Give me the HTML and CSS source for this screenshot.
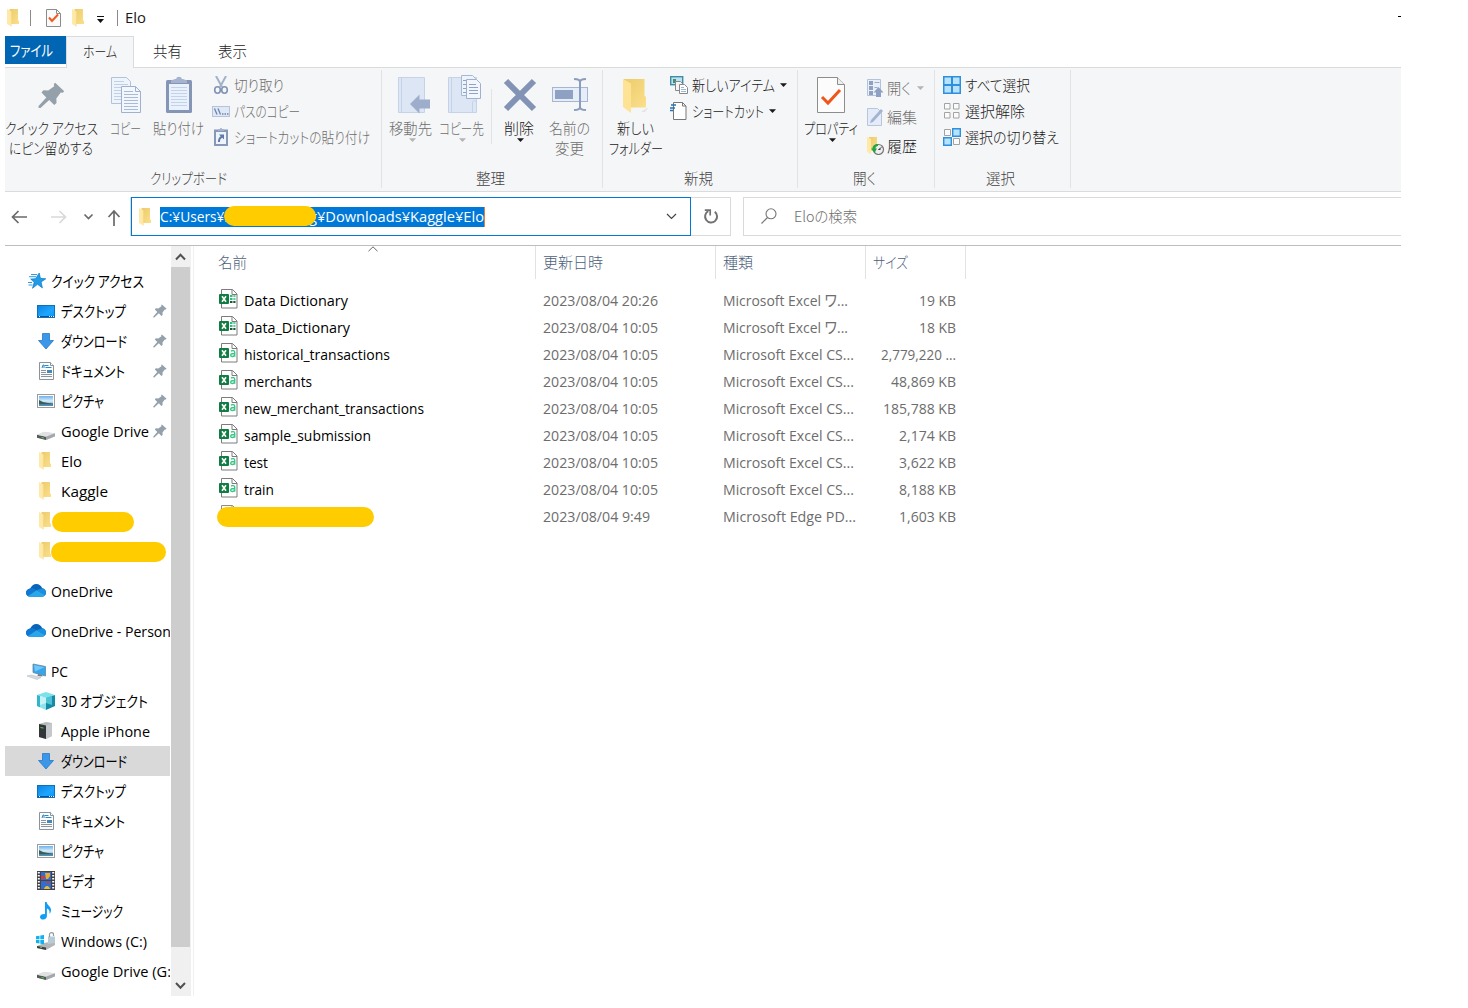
FILE: index.html
```html
<!DOCTYPE html>
<html lang="ja">
<head>
<meta charset="utf-8">
<title>Elo</title>
<link rel="stylesheet" href="styles.css">
</head>
<body>
<svg class="defs" aria-hidden="true">
  <defs>
    <linearGradient id="gold" x1="0" y1="0" x2="1" y2="1"><stop offset="0" stop-color="#eccb6b"/><stop offset="1" stop-color="#fbdf8b"/></linearGradient>
    <linearGradient id="sky" x1="0" y1="0" x2="1" y2="1"><stop offset="0" stop-color="#0a84e0"/><stop offset=".6" stop-color="#1ea5ff"/><stop offset="1" stop-color="#0d95f5"/></linearGradient>
    <linearGradient id="pic" x1="0" y1="0" x2="0" y2="1"><stop offset="0" stop-color="#6fb1ea"/><stop offset=".5" stop-color="#d8edfa"/><stop offset="1" stop-color="#3f86b5"/></linearGradient>
  </defs>
  <symbol id="folder" viewBox="0 0 12 18"><path d="M2.500 0H11v11.500l1 .3V15H3z" fill="url(#gold)"/><path d="M0 0l4.300 2.400V17.600L0 15z" fill="#ffe9a6"/><path d="M4.300 2.400V17.600" stroke="#f3d98a" stroke-width=".5"/></symbol>
  <symbol id="pin" viewBox="0 0 14 14"><path d="M8.900.4l4.700 4.400-.8.8-1-.1-2.300 3 .1 2.400-1.200 1-2.600-2.600L1.300 13.500.2 13.300.3 12.400 4.300 8 1.800 5.500l1-1.200 2.500.1L8.400 2.200 8.200 1.100z" fill="#94a1ab"/></symbol>
  <symbol id="star" viewBox="0 0 18 17"><path d="M11.200 1l1.200 5.300 5.400.5-4.700 3.200 1.300 5.900-4.900-3.600-5 4 1.700-6-3.500-3.300 4.900-.3z" fill="#1f9be8" stroke="#0f78c4" stroke-width=".7"/><path d="M3 2.500h6M1 4.700h7M0 10.500h4M.5 13h4" stroke="#2f9be0" stroke-width="1"/></symbol>
  <symbol id="desktop" viewBox="0 0 18 13"><rect x=".5" y=".5" width="17" height="12" fill="url(#sky)" stroke="#0c70bd"/><path d="M1 11.500h16" stroke="#084f8a"/><path d="M2 11.500h1M12 11.500h1M14 11.500h1M16 11.500h1" stroke="#fff"/></symbol>
  <symbol id="down" viewBox="0 0 16 17"><path d="M4.500.5h7v7h4L8 16 .5 7.500h4z" fill="#3c97e8" stroke="#2478c8" stroke-width=".8"/></symbol>
  <symbol id="doc" viewBox="0 0 15 18"><path d="M.5.5h11l3 3v14H.5z" fill="#fbfcfd" stroke="#8b9298"/><path d="M11.500.5v3h3" fill="#fff" stroke="#8b9298"/><path d="M5.500 3.500h4M6.500 5.500h6" stroke="#2c88c8"/><path d="M3 6l1-3h1v3" fill="none" stroke="#2c88c8"/><path d="M2 8.500h5M2 10.500h5M2 12.500h11M2 14.500h11" stroke="#8c9499"/><path d="M8 8h5v3H8z" fill="#4687b6"/></symbol>
  <symbol id="picture" viewBox="0 0 18 14"><rect x=".5" y=".5" width="17" height="13" fill="#fff" stroke="#989da1"/><rect x="2" y="2" width="14" height="10" fill="url(#pic)"/><path d="M2 6l4 2 5 1 5 .5v1H2z" fill="#375f5a"/></symbol>
  <symbol id="drive" viewBox="0 0 18 10"><path d="M0 5l7-3 11 1.500v3L9 10 0 7.500z" fill="#c9cbcc"/><path d="M0 4.700l9 2V10L0 7.700z" fill="#545859"/><path d="M0 4.700l7-3 11 1.500-9 3.500z" fill="#e0e1e2"/><path d="M9 6.700l9-3.500v3L9 10z" fill="#a5a8aa"/><path d="M4.500 7.500l2.500.5" stroke="#55d04e"/></symbol>
  <symbol id="cloud" viewBox="0 0 20 13"><path d="M4.500 12.800C1.800 12.800 0 11 0 8.800 0 6.500 1.800 4.800 4.200 4.500 5.400 1.800 7.700 0 10.300 0c2.800 0 5 1.700 5.900 4.200C18.500 4.500 20 6.300 20 8.500c0 2.500-1.800 4.300-4.200 4.300z" fill="#0a64b8"/><path d="M4.200 4.500c2-.5 4 0 6 1.700l-8 6C.8 11.500 0 10.300 0 8.800 0 6.500 1.800 4.800 4.200 4.500z" fill="#0f78d4"/><path d="M10.500 6.300l5.700-2.100C18.500 4.500 20 6.300 20 8.500c0 1-.3 1.900-.8 2.600z" fill="#1a8fe0"/><path d="M2 12.100l8.500-5.800 8.700 4.800c-.8 1.100-2 1.700-3.400 1.700H4.500c-1 0-1.800-.3-2.500-.7z" fill="#28a8ea"/></symbol>
  <symbol id="pc" viewBox="0 0 19 17"><path d="M6 1l12.500 2.500v9.500L6 9.500z" fill="#35a5ee" stroke="#64869c" stroke-width=".8"/><path d="M7 2l10.500 2.200L8 8.500z" fill="#71c6fa"/><path d="M11 11l4 1 .5 1.500-5-.5z" fill="#747f88"/><path d="M0 13l4-1 10 2.500-4 2z" fill="#d6dce1" stroke="#abb4ba" stroke-width=".5"/></symbol>
  <symbol id="cube" viewBox="0 0 18 18"><path d="M0 3l9-3 9 3-9 3z" fill="#7ae2ec"/><path d="M0 3l9 3v12l-9-4z" fill="#8be3ec"/><path d="M9 6l9-3v11l-9 4z" fill="#168ba5"/><path d="M0 3l3 1v11.300L0 14z" fill="#2fb6ca"/><path d="M3 4l6 2v5l-6 2z" fill="#c9f2f6"/><path d="M9 6l6-2v9l-6-2z" fill="#4fc3d4"/></symbol>
  <symbol id="tower" viewBox="0 0 15 17"><path d="M1 2l7-2 6 1v13l-6 3-7-2z" fill="#b7babd"/><path d="M1 2l7 1.500V17l-7-2z" fill="#323638"/><path d="M8 3.500L14 1v13l-6 3z" fill="#c5c8ca"/><path d="M2.500 5.500l3 .6" stroke="#55d04e"/></symbol>
  <symbol id="video" viewBox="0 0 18 19"><path d="M0 0h18v19H0z" fill="#444"/><path d="M1.800 1v18M16.200 1v18" stroke="#fff" stroke-width="2" stroke-dasharray="1.500 1.500"/><path d="M4 1h10v8H4zM4 10h10v8H4z" fill="#356bd0"/><path d="M8 2h5v3l-2 3H9z" fill="#e6b12a"/><path d="M4 5h4v3H4z" fill="#cf4038"/><path d="M9 12h4l-2-2z" fill="#d83a2e"/><path d="M7 18c1-4 5-4 6 0z" fill="#e6bd35"/></symbol>
  <symbol id="note" viewBox="0 0 12 18"><path d="M5 0h1.700c.3 3.500 4.800 4.500 4.300 8.500-.2 1.700-.7 2.500-1.400 3.200C10 8.500 8.500 7 6.900 6.500V14c0 2-1.600 3.500-3.700 3.500S0 16.400 0 14.900C0 13 2.500 11.800 5 12.200z" fill="#0f9df5"/></symbol>
  <symbol id="windrive" viewBox="0 0 20 18"><path d="M1 14l7-3 11-2v4l-9 5-9-2z" fill="#b2b6b8"/><path d="M0 4.200l3.500-.5v3.500H0zM4.300 3.600L8 3v4.200H4.300zM0 8h3.500v3.500L0 11zM4.300 8H8v4.200l-3.700-.5z" fill="#12b0f0"/><path d="M1 14l9 1.500V18l-9-2z" fill="#3c4041"/><path d="M12 4.500h7V11l-7 1z" fill="#b7cbd5"/><path d="M13.500 5V2.500c0-2.500 4-2.500 4 0V4" fill="none" stroke="#8f9a9f" stroke-width="1.200"/><path d="M4 15.200l2 .3" stroke="#55d04e"/></symbol>
  <symbol id="xlsx" viewBox="0 0 19 20"><path d="M2.500.5h11l4.500 4.500v14H2.500z" fill="#fff" stroke="#7c7c7c"/><path d="M13 .5V5.500h5" fill="none" stroke="#7c7c7c"/><path d="M11 7h2.500M11 10h2.500" stroke="#2fbd78" stroke-width="2"/><path d="M14.300 7h2.200M14.300 10h2.200" stroke="#59d39c" stroke-width="2"/><path d="M11 13h2.500M14.300 13h2.200" stroke="#185c37" stroke-width="2"/><rect x="0" y="5" width="10" height="10" rx="1" fill="#107c41"/><path d="M3 7.200l4 5.600M7 7.200l-4 5.600" stroke="#fff" stroke-width="1.600"/></symbol>
  <symbol id="csv" viewBox="0 0 19 20"><path d="M2.500.5h11l4.500 4.500v14H2.500z" fill="#fff" stroke="#7c7c7c"/><path d="M13 .5V5.500h5" fill="none" stroke="#7c7c7c"/><path d="M12 8c1.500-.7 3.700-.6 3.700 1.200v4.600M15.700 10.500c-2-.1-4 .2-4 1.700 0 1.900 3.200 1.600 4-.3" fill="none" stroke="#37c885" stroke-width="1.400"/><rect x="0" y="5" width="10" height="10" rx="1" fill="#107c41"/><path d="M3 7.200l4 5.600M7 7.200l-4 5.600" stroke="#fff" stroke-width="1.600"/></symbol>
  <symbol id="page" viewBox="0 0 19 20"><path d="M2.500.5h11l4.500 4.500v14H2.500z" fill="#fff" stroke="#8c8c8c"/><path d="M13 .5V5.500h5" fill="none" stroke="#8c8c8c"/></symbol>
  <symbol id="caret" viewBox="0 0 7 4"><path d="M0 .2h7L3.500 3.900z" fill="currentColor"/></symbol>
</svg>

<div class="window">
  <header class="titlebar">
    <svg class="title-icons" viewBox="5 0 117 36">
      <use href="#folder" x="7" y="9" width="12" height="18"/>
      <path d="M30.500 10v16M117.500 10v16" stroke="#8a8a8a"/>
      <path d="M46.500 9.500h10l4 4v13h-14z" fill="#fafafa" stroke="#8c8c8c"/><path d="M56.500 9.500v4h4" fill="none" stroke="#8c8c8c"/><path d="M49 17.500l3 3.500 6-6.500" fill="none" stroke="#f05a1c" stroke-width="2"/>
      <use href="#folder" x="72" y="9" width="12" height="18"/>
      <path d="M97 16.500h7" stroke="#111"/><path d="M97 19h7l-3.500 4z" fill="#111"/>
    </svg>
    <span class="t en title" data-w="21">Elo</span>
    <i class="minimize"></i>
  </header>

  <nav class="tabs">
    <span class="tab file"><span class="t" data-w="43">ファイル</span></span>
    <span class="tab active"><span class="t" data-w="34">ホーム</span></span>
    <span class="tab"><span class="t" data-w="29">共有</span></span>
    <span class="tab"><span class="t" data-w="29">表示</span></span>
  </nav>

  <section class="ribbon">
    <div class="group clipboard">
      <div class="tools">
        <div class="big w94">
          <svg viewBox="5 75 94 40"><use href="#pin" x="38" y="82" width="27" height="27"/></svg>
          <span class="t nudge" data-w="93">クイック アクセス</span><span class="t nudge" data-w="84">にピン留めする</span>
        </div>
        <div class="big w52 off">
          <svg viewBox="99 75 52 40">
            <path d="M111.500 77.500h15l4 4v22h-19z" fill="#eef4fc" stroke="#b3c2da"/><path d="M114 84.500h14M114 87.500h14M114 90.500h14M114 93.500h14M114 96.500h14M114 99.500h14M114 81.500h10" stroke="#c2cfe4"/>
            <path d="M121.500 86.500h14l5 5v21h-19z" fill="#f2f7fe" stroke="#9fb1cf"/><path d="M135.500 86.500v5h5" fill="none" stroke="#9fb1cf"/><path d="M124 91.500h9M124 94.500h14M124 97.500h14M124 100.500h14M124 103.500h14M124 106.500h14M124 109.500h14" stroke="#a9bad6"/>
          </svg>
          <span class="t" data-w="31">コピー</span>
        </div>
        <div class="big w55 off">
          <svg viewBox="151 75 55 40"><rect x="166" y="80" width="26" height="33" rx="1.500" fill="#8595b5"/><path d="M169 84h20v26h-20z" fill="#e9f1fc"/><path d="M171 87.500h16M171 90.500h16M171 93.500h16M171 96.500h16M171 99.500h16M171 102.500h16M171 105.500h16" stroke="#c4d2e8"/><path d="M171 83v-2.500l4-1.500h1.200c.2-3 5.400-3 5.600 0h1.200l4 1.500V83z" fill="#a5b3ce"/></svg>
          <span class="t" data-w="51">貼り付け</span>
        </div>
        <div class="smalls first off">
          <div class="small"><svg viewBox="0 0 18 18"><path d="M4 0l6 11M14 0L8 11" stroke="#a3b1c9" stroke-width="2"/><ellipse cx="5.500" cy="14" rx="2.800" ry="3.200" fill="none" stroke="#8093b5" stroke-width="1.600"/><ellipse cx="12.500" cy="14" rx="2.800" ry="3.200" fill="none" stroke="#8093b5" stroke-width="1.600"/></svg><span class="t" data-w="50">切り取り</span></div>
          <div class="small"><svg viewBox="0 0 18 18"><rect x=".5" y="4.500" width="17" height="10" fill="#dfe8f5" stroke="#b5c4dc"/><path d="M2.500 6.500l2.500 6M6 6.500l2.500 6" stroke="#6f84ab" stroke-width="1.300"/><path d="M10 12h1.500M12.500 12H14M15 12h1.500" stroke="#6f84ab" stroke-width="1.500"/></svg><span class="t" data-w="66">パスのコピー</span></div>
          <div class="small"><svg viewBox="0 0 18 18"><rect x="2" y="1.500" width="14" height="16.500" fill="#8798b8"/><path d="M4 4h10v12H4z" fill="#eef4fc"/><path d="M6 3V1h2c0-1.500 2-1.500 2 0h2v2z" fill="#a5b3ce"/><path d="M7 6.500h5v5l-1.700-1.700C8.500 10.500 8 12 8 14H6c0-3 .8-4.500 2.700-5.800z" fill="#6079a6"/></svg><span class="t" data-w="136">ショートカットの貼り付け</span></div>
        </div>
      </div>
      <div class="caption shift"><span class="t" data-w="77">クリップボード</span></div>
    </div>

    <div class="group organize">
      <div class="tools">
        <div class="big w53 off">
          <svg viewBox="384 75 53 40"><path d="M398.500 77.500h26v35h-26z" fill="#dce6f5" stroke="#c5d2e7"/><path d="M401.500 78v34" stroke="#c5d2e7"/><path d="M410 104l9.500-9.500v5H430v9h-10.500v5z" fill="#9dadcb"/></svg>
          <span class="t" data-w="43">移動先</span><svg class="caret"><use href="#caret"/></svg>
        </div>
        <div class="big w48 off">
          <svg viewBox="437 75 48 40"><path d="M448.500 77.500h28v35h-28z" fill="#dce6f5" stroke="#c5d2e7"/><path d="M451.500 78v34M472.500 112v-10l2-2 2 2v10" fill="none" stroke="#c5d2e7"/><path d="M461.500 75.500h11l3 3v17h-14z" fill="#eef4fc" stroke="#a8b8d4"/><path d="M466.500 79.500h10l4 4v15h-14z" fill="#f2f7fe" stroke="#9fb1cf"/><path d="M469 84.500h7M469 87.500h9M469 90.500h9M469 93.500h9M463 80.500h3M463 84.500h3M463 88.500h3M463 92.500h3" stroke="#8fa3c6"/></svg>
          <span class="t" data-w="45">コピー先</span><svg class="caret"><use href="#caret"/></svg>
        </div>
        <i class="divider"></i>
        <div class="big w50">
          <svg viewBox="494 75 50 40"><path d="M506 81l28 28M534 81l-28 28" stroke="#8293b5" stroke-width="6"/></svg>
          <span class="t" data-w="30">削除</span><svg class="caret"><use href="#caret"/></svg>
        </div>
        <div class="big w50 off">
          <svg viewBox="544 75 50 40"><rect x="552.500" y="87.500" width="35" height="14" fill="#e5edf8" stroke="#a6b6d2"/><rect x="555" y="90" width="18" height="9" fill="#8fa1c2"/><path d="M574 79c4 0 6 1 6 3v25c0 2-2 3-6 3M586 79c-4 0-6 1-6 3v25c0 2 2 3 6 3" fill="none" stroke="#8b9dbe" stroke-width="2"/></svg>
          <span class="t" data-w="41">名前の</span><span class="t" data-w="29">変更</span>
        </div>
      </div>
      <div class="caption"><span class="t" data-w="29">整理</span></div>
    </div>

    <div class="group new">
      <div class="tools">
        <div class="big w54">
          <svg viewBox="609 75 54 40"><path d="M641 112l6-4h1l-3 4z" fill="#e4e4e4"/><path d="M624 79h20.500v17l1.500 1v10l-1 .5H626z" fill="url(#gold)"/><path d="M623 79l8 4.500V113l-8-6z" fill="#ffe394"/></svg>
          <span class="t nudge" data-w="37">新しい</span><span class="t" data-w="54">フォルダー</span>
        </div>
        <div class="smalls">
          <div class="small"><svg viewBox="0 0 18 18"><rect x=".7" y=".7" width="12" height="8" fill="#bfe3ee" stroke="#3f8ca8" stroke-width="1.400"/><path d="M3 3h3v4H3z" fill="#3d8f7a"/><path d="M5.500 5.500h5l3 3v6h-8z" fill="#f5f5f5" stroke="#888"/><path d="M9.500 8.500h5l3 3v6h-8z" fill="#fff" stroke="#888"/><path d="M11 11.500h3M11 13.500h5M11 15.500h5" stroke="#9ab6d8"/></svg><span class="t" data-w="83">新しいアイテム</span><svg class="caret"><use href="#caret"/></svg></div>
          <div class="small"><svg viewBox="0 0 18 18"><path d="M3.500.5h9l3.500 3.500v13.500H3.500z" fill="#fff" stroke="#777"/><path d="M12.500.5v3.500h3.500" fill="none" stroke="#777"/><path d="M1 3h5M0 6h5M0 8.500h3" stroke="#2673b5" stroke-width="1.300"/></svg><span class="t" data-w="72">ショートカット</span><svg class="caret"><use href="#caret"/></svg></div>
        </div>
      </div>
      <div class="caption"><span class="t" data-w="29">新規</span></div>
    </div>

    <div class="group open">
      <div class="tools">
        <div class="big w54">
          <svg viewBox="804 75 54 40"><path d="M817.500 77.500h20l7 7v28h-27z" fill="#fcfcfc" stroke="#8d8d8d"/><path d="M837.500 77.500v7h7" fill="#eee" stroke="#8d8d8d"/><path d="M822 97l6 6 12-13" fill="none" stroke="#f0561a" stroke-width="3"/></svg>
          <span class="t" data-w="54">プロパティ</span><svg class="caret"><use href="#caret"/></svg>
        </div>
        <div class="smalls tall">
          <div class="small off"><svg viewBox="0 0 18 18"><path d="M.5.5h13v16H.5z" fill="#e9f0fa" stroke="#b4c2da"/><path d="M2 2h4v4H2zM2 7h4v4H2zM2 12h4v4H2z" fill="#8fa0c0"/><path d="M7.500 3.500h5M7.500 8.500h3" stroke="#9bacca"/><path d="M11.500 8l5 5.500H14V18H9v-4.500H6.500z" fill="#8fa1c3"/></svg><span class="t" data-w="24">開く</span><svg class="caret"><use href="#caret"/></svg></div>
          <div class="small off"><svg viewBox="0 0 18 18"><path d="M.5.5h10l4 4v13H.5z" fill="#e3ecf8" stroke="#b7c5dd"/><path d="M3 15l1-3L14 1l2 2L6 14z" fill="#a4b4d0"/></svg><span class="t" data-w="30">編集</span></div>
          <div class="small"><svg viewBox="0 0 18 18"><path d="M2 0h8v14H2z" fill="url(#gold)"/><path d="M0 0l4 2v15l-4-2z" fill="#ffe9a6"/><circle cx="11.500" cy="12.500" r="5" fill="#eee" stroke="#777" stroke-width="1.200"/><path d="M11.500 12.500l3-2M11.500 12.500h2" stroke="#444"/><path d="M11 7c-3.500 0-5.500 2-5.500 4.500H4l3.500 4.500 2.500-4.500H8.500c0-1.500 1-2.500 2.500-2.500z" fill="#29a344"/></svg><span class="t" data-w="30">履歴</span></div>
        </div>
      </div>
      <div class="caption"><span class="t" data-w="23">開く</span></div>
    </div>

    <div class="group select">
      <div class="tools">
        <div class="smalls">
          <div class="small"><svg viewBox="0 0 18 18"><path d="M0 0h18v18H0z" fill="#2e8fdc"/><path d="M1.500 1.500h6.500v6.500H1.500zM10 1.500h6.500v6.500H10zM1.500 10h6.500v6.500H1.500zM10 10h6.500v6.500H10z" fill="#b7e2fb"/></svg><span class="t" data-w="65">すべて選択</span></div>
          <div class="small"><svg viewBox="0 0 18 18"><path d="M1.500 1.500h5.500v5.500H1.500zM10.500 1.500h5.500v5.500h-5.500zM1.500 10.500h5.500v5.500H1.500zM10.500 10.500h5.500v5.500h-5.500z" fill="#fbfbfb" stroke="#a3a3a3"/></svg><span class="t" data-w="60">選択解除</span></div>
          <div class="small"><svg viewBox="0 0 18 18"><path d="M1.500 1.500h6v6h-6zM10.500 10.500h6v6h-6z" fill="#fbfbfb" stroke="#a3a3a3"/><path d="M9.700.7h7.600v7.600H9.700zM.7 9.700h7.600v7.600H.7z" fill="#b7e2fb" stroke="#2e8fdc" stroke-width="1.400"/></svg><span class="t" data-w="94">選択の切り替え</span></div>
        </div>
      </div>
      <div class="caption"><span class="t" data-w="29">選択</span></div>
    </div>
  </section>

  <section class="navbar">
    <svg class="arrows" viewBox="5 197 125 39" fill="none">
      <path d="M12.500 217H27M18.500 211l-6 6 6 6" stroke="#6a6a6a" stroke-width="1.700"/>
      <path d="M51 217h14.500M59.500 211l6 6-6 6" stroke="#d9d9d9" stroke-width="1.700"/>
      <path d="M84.500 214.500l4 4 4-4" stroke="#6a6a6a" stroke-width="1.700"/>
      <path d="M114 226v-15M108.500 217l5.500-6 5.500 6" stroke="#6a6a6a" stroke-width="1.700"/>
    </svg>
    <div class="address">
      <svg class="folder-icon"><use href="#folder"/></svg>
      <div class="selection"><span class="t en" data-w="71">C:¥Users¥s</span><span class="t en" data-w="175">g¥Downloads¥Kaggle¥Elo</span><i class="mask path-mask"></i></div>
      <svg class="chev" viewBox="0 0 11 7"><path d="M1 1l4.500 4.500L10 1" fill="none" stroke="#444" stroke-width="1.200"/></svg>
    </div>
    <div class="refresh"><svg viewBox="0 0 16 16"><path d="M11.800 2.800a6 6 0 1 1-6.500-.6" fill="none" stroke="#727272" stroke-width="2"/><path d="M1.800 1.200h5.400v5.400" fill="none" stroke="#727272" stroke-width="1.700"/></svg></div>
    <div class="search"><svg viewBox="0 0 16 16"><circle cx="10" cy="5.800" r="5" fill="none" stroke="#777" stroke-width="1.100"/><path d="M6.500 9.500L.5 15.500" stroke="#777" stroke-width="1.200"/></svg><span class="t" data-w="63">Eloの検索</span></div>
  </section>

  <main class="content">
    <aside class="tree">
      <div class="node root"><svg viewBox="0 0 20 20"><use href="#star" x="2" y="1" width="18" height="17"/></svg><span class="t" data-w="93">クイック アクセス</span></div>
      <div class="node"><svg viewBox="0 0 20 20"><use href="#desktop" x="1" y="4" width="18" height="13"/></svg><span class="t" data-w="65">デスクトップ</span><svg class="pin"><use href="#pin"/></svg></div>
      <div class="node"><svg viewBox="0 0 20 20"><use href="#down" x="2" y="2" width="16" height="17"/></svg><span class="t" data-w="66">ダウンロード</span><svg class="pin"><use href="#pin"/></svg></div>
      <div class="node"><svg viewBox="0 0 20 20"><use href="#doc" x="3" y="1" width="15" height="18"/></svg><span class="t" data-w="64">ドキュメント</span><svg class="pin"><use href="#pin"/></svg></div>
      <div class="node"><svg viewBox="0 0 20 20"><use href="#picture" x="1" y="3" width="18" height="14"/></svg><span class="t" data-w="43">ピクチャ</span><svg class="pin"><use href="#pin"/></svg></div>
      <div class="node"><svg viewBox="0 0 20 20"><use href="#drive" x="1" y="9" width="18" height="10"/></svg><span class="t en" data-w="88">Google Drive</span><svg class="pin"><use href="#pin"/></svg></div>
      <div class="node"><svg viewBox="0 0 20 20"><use href="#folder" x="3" y="1" width="12" height="18"/></svg><span class="t en" data-w="21">Elo</span></div>
      <div class="node"><svg viewBox="0 0 20 20"><use href="#folder" x="3" y="1" width="12" height="18"/></svg><span class="t en" data-w="47">Kaggle</span></div>
      <div class="node"><svg viewBox="0 0 20 20"><use href="#folder" x="3" y="1" width="12" height="18"/></svg><i class="mask short"></i></div>
      <div class="node"><svg viewBox="0 0 20 20"><use href="#folder" x="3" y="1" width="12" height="18"/></svg><i class="mask long"></i></div>
      <div class="node root section"><svg viewBox="0 0 20 20"><use href="#cloud" x="0" y="3" width="20" height="13"/></svg><span class="t en" data-w="62">OneDrive</span></div>
      <div class="node root section"><svg viewBox="0 0 20 20"><use href="#cloud" x="0" y="3" width="20" height="13"/></svg><span class="t en" data-w="120">OneDrive - Person</span></div>
      <div class="node root section"><svg viewBox="0 0 20 20"><use href="#pc" x="1" y="2" width="19" height="17"/></svg><span class="t en" data-w="17">PC</span></div>
      <div class="node"><svg viewBox="0 0 20 20"><use href="#cube" x="1" y="1" width="18" height="18"/></svg><span class="t" data-w="87">3D オブジェクト</span></div>
      <div class="node"><svg viewBox="0 0 20 20"><use href="#tower" x="2" y="1" width="15" height="17"/></svg><span class="t en" data-w="89">Apple iPhone</span></div>
      <div class="node current"><svg viewBox="0 0 20 20"><use href="#down" x="2" y="2" width="16" height="17"/></svg><span class="t" data-w="66">ダウンロード</span></div>
      <div class="node"><svg viewBox="0 0 20 20"><use href="#desktop" x="1" y="4" width="18" height="13"/></svg><span class="t" data-w="65">デスクトップ</span></div>
      <div class="node"><svg viewBox="0 0 20 20"><use href="#doc" x="3" y="1" width="15" height="18"/></svg><span class="t" data-w="64">ドキュメント</span></div>
      <div class="node"><svg viewBox="0 0 20 20"><use href="#picture" x="1" y="3" width="18" height="14"/></svg><span class="t" data-w="43">ピクチャ</span></div>
      <div class="node"><svg viewBox="0 0 20 20"><use href="#video" x="1" y="0" width="18" height="19"/></svg><span class="t" data-w="34">ビデオ</span></div>
      <div class="node"><svg viewBox="0 0 20 20"><use href="#note" x="4" y="1" width="12" height="18"/></svg><span class="t" data-w="62">ミュージック</span></div>
      <div class="node"><svg viewBox="0 0 20 20"><use href="#windrive" x="0" y="1" width="20" height="18"/></svg><span class="t en" data-w="86">Windows (C:)</span></div>
      <div class="node"><svg viewBox="0 0 20 20"><use href="#drive" x="1" y="9" width="18" height="10"/></svg><span class="t en" data-w="110">Google Drive (G:</span></div>
    </aside>

    <div class="scrollbar">
      <svg viewBox="0 0 20 20"><path d="M5 13.500l4.500-4.700 4.500 4.700" fill="none" stroke="#505050" stroke-width="2"/></svg>
      <i class="thumb"></i>
      <svg viewBox="0 0 20 20"><path d="M5 7l4.500 4.700L14 7" fill="none" stroke="#505050" stroke-width="2"/></svg>
    </div>

    <section class="files">
      <div class="columns">
        <span class="col name"><span class="t" data-w="29">名前</span><svg class="sort" viewBox="0 0 10 6"><path d="M.5 5.200L5 .8l4.500 4.400" fill="none" stroke="#666"/></svg></span>
        <span class="col"><span class="t" data-w="60">更新日時</span></span>
        <span class="col"><span class="t" data-w="30">種類</span></span>
        <span class="col"><span class="t" data-w="35">サイズ</span></span>
      </div>
      <div class="row"><span class="fname"><svg><use href="#xlsx"/></svg><span class="t en" data-w="104">Data Dictionary</span></span><span class="cell"><span class="t en" data-w="115">2023/08/04 20:26</span></span><span class="cell"><span class="t en" data-w="125">Microsoft Excel ワ...</span></span><span class="size"><span class="t en" data-w="37">19 KB</span></span></div>
      <div class="row"><span class="fname"><svg><use href="#xlsx"/></svg><span class="t en" data-w="106">Data_Dictionary</span></span><span class="cell"><span class="t en" data-w="115">2023/08/04 10:05</span></span><span class="cell"><span class="t en" data-w="125">Microsoft Excel ワ...</span></span><span class="size"><span class="t en" data-w="37">18 KB</span></span></div>
      <div class="row"><span class="fname"><svg><use href="#csv"/></svg><span class="t en" data-w="146">historical_transactions</span></span><span class="cell"><span class="t en" data-w="115">2023/08/04 10:05</span></span><span class="cell"><span class="t en" data-w="131">Microsoft Excel CS...</span></span><span class="size"><span class="t en" data-w="75">2,779,220 ...</span></span></div>
      <div class="row"><span class="fname"><svg><use href="#csv"/></svg><span class="t en" data-w="68">merchants</span></span><span class="cell"><span class="t en" data-w="115">2023/08/04 10:05</span></span><span class="cell"><span class="t en" data-w="131">Microsoft Excel CS...</span></span><span class="size"><span class="t en" data-w="65">48,869 KB</span></span></div>
      <div class="row"><span class="fname"><svg><use href="#csv"/></svg><span class="t en" data-w="180">new_merchant_transactions</span></span><span class="cell"><span class="t en" data-w="115">2023/08/04 10:05</span></span><span class="cell"><span class="t en" data-w="131">Microsoft Excel CS...</span></span><span class="size"><span class="t en" data-w="73">185,788 KB</span></span></div>
      <div class="row"><span class="fname"><svg><use href="#csv"/></svg><span class="t en" data-w="127">sample_submission</span></span><span class="cell"><span class="t en" data-w="115">2023/08/04 10:05</span></span><span class="cell"><span class="t en" data-w="131">Microsoft Excel CS...</span></span><span class="size"><span class="t en" data-w="57">2,174 KB</span></span></div>
      <div class="row"><span class="fname"><svg><use href="#csv"/></svg><span class="t en" data-w="24">test</span></span><span class="cell"><span class="t en" data-w="115">2023/08/04 10:05</span></span><span class="cell"><span class="t en" data-w="131">Microsoft Excel CS...</span></span><span class="size"><span class="t en" data-w="57">3,622 KB</span></span></div>
      <div class="row"><span class="fname"><svg><use href="#csv"/></svg><span class="t en" data-w="30">train</span></span><span class="cell"><span class="t en" data-w="115">2023/08/04 10:05</span></span><span class="cell"><span class="t en" data-w="131">Microsoft Excel CS...</span></span><span class="size"><span class="t en" data-w="57">8,188 KB</span></span></div>
      <div class="row"><span class="fname"><svg><use href="#page"/></svg><i class="mask file-mask"></i></span><span class="cell"><span class="t en" data-w="107">2023/08/04 9:49</span></span><span class="cell"><span class="t en" data-w="133">Microsoft Edge PD...</span></span><span class="size"><span class="t en" data-w="57">1,603 KB</span></span></div>
    </section>
  </main>
</div>
<script src="fit.js"></script>
</body>
</html>
```
FILE: styles.css
```css
* { box-sizing: border-box; }
body { margin: 0; background: #fff; color: #1a1a1a; font: 15px/20px "Noto Sans CJK JP", sans-serif; font-feature-settings: "palt"; overflow: hidden; }
svg { display: block; flex: none; }
.defs { position: absolute; width: 0; height: 0; }
.t { display: inline-block; flex: none; white-space: pre; transform-origin: 0 50%; font-weight: 300; }
.en { font-family: "Open Sans", "Noto Sans CJK JP", sans-serif; font-size: 14.5px; font-weight: 400; }
.mask { display: block; flex: none; height: 20px; border-radius: 10px; background: #ffcc00; }

.window { width: 1396px; margin-left: 5px; }

.titlebar { display: flex; align-items: center; height: 36px; }
.title-icons { width: 117px; height: 36px; }
.title { margin-left: 3px; }
.minimize { width: 3px; height: 1px; margin: 0 0 3px auto; background: #000; }

.tabs { display: flex; height: 31px; }
.tab { display: flex; justify-content: center; padding: 5px 0 0 1px; width: 65px; }
.tab.file { width: 61px; height: 28px; padding: 4px 8px 0 0; background: #0066b4; color: #fff; }
.tab.file .t, .tree .t { font-weight: 400; }
.tab.active { position: relative; z-index: 1; width: 68px; height: 32px; padding: 4px 0 0; border: 1px solid #dadbdc; border-bottom: 0; background: #f5f6f7; }

.ribbon { display: flex; height: 125px; border-top: 1px solid #dadbdc; border-bottom: 1px solid #dadbdc; background: #f5f6f7; }
.group { display: flex; flex-direction: column; justify-content: space-between; height: 120px; background: linear-gradient(#e2e3e4, #e2e3e4) right 2px / 1px 118px no-repeat; }
.clipboard { width: 377px; }
.organize { width: 221px; padding-left: 2px; }
.new { width: 195px; padding-left: 6px; }
.open { width: 137px; padding-left: 6px; }
.select { width: 136px; padding-left: 8px; }
.tools { display: flex; height: 96px; }
.caption { display: flex; justify-content: center; height: 20px; color: #444; }
.caption.shift { padding-right: 11px; }
.organize .caption { padding-right: 7px; }
.new .caption { padding-right: 10px; }
.open .caption { padding-right: 10px; }
.select .caption { padding-right: 13px; }
.off { color: #6d6d6d; }
.big { display: flex; flex-direction: column; align-items: center; padding-top: 7px; }
.big > svg:first-child { width: 100%; height: 40px; margin-bottom: 3px; }
.big .nudge { position: relative; left: -1px; }
.w94 { width: 94px; }
.w55 { width: 55px; }
.w54 { width: 54px; }
.w53 { width: 53px; }
.w52 { width: 52px; }
.w50 { width: 50px; }
.w48 { width: 48px; }
.caret { width: 7px; height: 4px; color: #1a1a1a; }
.off .caret { color: #b4b4b4; }
.big .caret { margin-left: 3px; }
.divider { width: 1px; height: 55px; margin: 21px 2px 0 6px; background: #e2e3e4; }
.smalls { display: flex; flex-direction: column; padding-top: 4px; margin-left: 7px; }
.smalls.first { margin-left: 6px; }
.select .smalls { margin-left: 0; }
.small { display: flex; align-items: center; height: 26px; gap: 4px; }
.small > svg:first-child { width: 18px; height: 18px; }
.small .caret { margin-left: 1px; }
.smalls.tall { padding-top: 5px; margin-left: 9px; }
.tall .small { height: 29px; gap: 2px; }
.tall .caret { margin-left: 4px; }

.navbar { display: flex; height: 54px; padding: 5px 0 9px; border-bottom: 1px solid #bdbdbd; }
.arrows { width: 125px; height: 39px; }
.address { display: flex; align-items: center; width: 560px; margin-left: 1px; padding: 0 13px 0 7px; border: 1px solid #0078d7; box-shadow: -1px 0 #dadada; }
.folder-icon { width: 12px; height: 18px; margin-right: 9px; }
.selection { position: relative; display: flex; justify-content: space-between; width: 325px; height: 20px; background: #0078d7; border-right: 1px solid #e08040; color: #fff; }
.path-mask { position: absolute; left: 64px; top: -1px; width: 92px; }
.chev { width: 11px; height: 7px; margin-left: auto; }
.refresh { display: flex; align-items: center; justify-content: center; width: 40px; padding-left: 1px; border: 1px solid #dadada; border-left: 0; }
.refresh svg { width: 16px; height: 16px; }
.search { display: flex; align-items: center; flex: 1; margin-left: 12px; padding: 0 0 1px 17px; border: 1px solid #dadada; border-right: 0; color: #6d6d6d; }
.search svg { width: 16px; height: 16px; margin-right: 17px; }

.content { display: flex; height: 750px; }
.tree { width: 165px; padding-top: 20px; overflow: hidden; color: #000; }
.node { display: flex; align-items: center; height: 30px; padding-left: 31px; position: relative; }
.node > svg:first-child { width: 20px; height: 20px; margin-right: 5px; }
.node > .en, .node > .mask { margin-top: 2px; }
.node.root { padding-left: 21px; }
.node.section { margin-top: 10px; }
.node.current { background: #d9d9d9; }
.node .pin { position: absolute; left: 148px; top: 8px; width: 14px; height: 14px; }
.mask.short { width: 82px; margin-left: -9px; }
.mask.long { width: 115px; margin-left: -10px; }
.scrollbar { display: flex; flex-direction: column; width: 20px; margin-left: 1px; background: #f0f0f0; }
.scrollbar svg { width: 20px; height: 20px; }
.thumb { display: block; width: 19px; height: 680px; margin: 1px 0 29px; background: #cdcdcd; }

.files { flex: 1; margin-left: 2px; border-left: 1px solid #f0f0f0; }
.columns { display: grid; grid-template-columns: 342px 180px 150px 100px; height: 33px; margin-bottom: 8px; color: #4c607a; }
.col { position: relative; padding: 6px 0 0 7px; border-right: 1px solid #e2e2e2; }
.col.name { padding-left: 24px; }
.sort { position: absolute; left: 174px; top: 0; width: 10px; height: 6px; }
.row { display: grid; grid-template-columns: 349px 180px 143px 90px; align-items: center; height: 27px; color: #6d6d6d; }
.fname { position: relative; display: flex; align-items: center; padding-left: 25px; gap: 6px; color: #000; }
.fname svg { width: 19px; height: 20px; margin-bottom: 4px; }
.size { display: flex; justify-content: flex-end; }
.file-mask { position: absolute; left: 23px; top: 2px; width: 157px; }
```
FILE: fit.js
```js
// Condenses or widens each label to the width reserved for it.
document.querySelectorAll('.t[data-w]').forEach(function (label) {
  var target = Number(label.dataset.w);
  var natural = label.getBoundingClientRect().width;
  label.style.transform = 'scaleX(' + target / natural + ')';
  label.style.marginRight = target - natural + 'px';
});
```
